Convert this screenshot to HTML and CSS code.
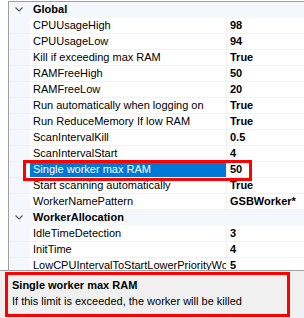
FILE: index.html
```html
<!DOCTYPE html>
<html lang="en">
<head>
    <meta charset="UTF-8">
    <title>Settings</title>
    <link rel="stylesheet" href="styles.css">
</head>
<body>
    <div id="wrap">
        <div class="grid">
            <div class="row cat">
                <div class="margin"><svg width="8" height="5" viewBox="0 0 8 5"><polyline points="0.5,0.5 4,4 7.5,0.5" fill="none" stroke="#555" stroke-width="1.1"/></svg></div>
                <div class="name">Global</div>
            </div>
            <div class="row"><div class="margin"></div><div class="name">CPUUsageHigh</div><div class="val">98</div></div>
            <div class="row"><div class="margin"></div><div class="name">CPUUsageLow</div><div class="val">94</div></div>
            <div class="row"><div class="margin"></div><div class="name">Kill if exceeding max RAM</div><div class="val">True</div></div>
            <div class="row"><div class="margin"></div><div class="name">RAMFreeHigh</div><div class="val">50</div></div>
            <div class="row"><div class="margin"></div><div class="name">RAMFreeLow</div><div class="val">20</div></div>
            <div class="row"><div class="margin"></div><div class="name">Run automatically when logging on</div><div class="val">True</div></div>
            <div class="row"><div class="margin"></div><div class="name">Run ReduceMemory If low RAM</div><div class="val">True</div></div>
            <div class="row"><div class="margin"></div><div class="name">ScanIntervalKill</div><div class="val">0.5</div></div>
            <div class="row"><div class="margin"></div><div class="name">ScanIntervalStart</div><div class="val">4</div></div>
            <div class="row sel"><div class="margin"></div><div class="name">Single worker max RAM</div><div class="val">50</div></div>
            <div class="row"><div class="margin"></div><div class="name">Start scanning automatically</div><div class="val">True</div></div>
            <div class="row"><div class="margin"></div><div class="name">WorkerNamePattern</div><div class="val">GSBWorker*</div></div>
            <div class="row cat">
                <div class="margin"><svg width="8" height="5" viewBox="0 0 8 5"><polyline points="0.5,0.5 4,4 7.5,0.5" fill="none" stroke="#555" stroke-width="1.1"/></svg></div>
                <div class="name">WorkerAllocation</div>
            </div>
            <div class="row"><div class="margin"></div><div class="name">IdleTimeDetection</div><div class="val">3</div></div>
            <div class="row"><div class="margin"></div><div class="name">InitTime</div><div class="val">4</div></div>
            <div class="row"><div class="margin"></div><div class="name">LowCPUIntervalToStartLowerPriorityWor</div><div class="val">5</div></div>
        </div>
        <div class="help">
            <p class="help_title">Single worker max RAM</p>
            <p>If this limit is exceeded, the worker will be killed</p>
        </div>

        <!-- red marks drawn over the screenshot -->
        <div class="mark mark_row"></div>
        <div class="mark mark_help"></div>
    </div>
</body>
</html>
```

FILE: styles.css
```css
* {
    margin: 0;
    padding: 0;
    box-sizing: border-box;
}

body {
    background: #fff;
    font-family: "Liberation Sans", Arial, sans-serif;
    font-size: 11px;
    color: #000;
}

#wrap {
    position: relative;
    width: 304px;
    height: 318px;
    overflow: hidden;
}

.grid {
    margin: 1px 0 0 8px;
    height: 269px;
    border-top: 1px solid #a0a0a0;
    border-left: 1px solid #a0a0a0;
    overflow: hidden;
}

.row {
    display: grid;
    grid-template-columns: 21px 196px 1fr;
    height: 16px;
    border-bottom: 1px solid #f0f2f7;
    line-height: 15px;
}

.margin {
    background: #f4f7fc;
    display: flex;
    align-items: center;
    padding-left: 6px;
}

.name {
    padding-left: 3px;
    white-space: nowrap;
    overflow: hidden;
}

.val {
    border-left: 1px solid #f0f2f7;
    padding-left: 3px;
    font-weight: bold;
    white-space: nowrap;
    overflow: hidden;
}

.cat {
    background: #f4f7fc;
    border-bottom-color: #f4f7fc;
}

.cat .name {
    font-weight: bold;
}

.sel .name {
    background: #0078d7;
    color: #fff;
}

.help {
    height: 48px;
    border-top: 1px solid #a0a0a0;
    background: #f0f0f0;
    padding: 6px 0 0 12px;
    line-height: 16px;
}

.help_title {
    font-weight: bold;
}

.mark {
    position: absolute;
    border: 3px solid #f00;
}

.mark_row {
    left: 23px;
    top: 160px;
    width: 229px;
    height: 21px;
}

.mark_help {
    left: 5px;
    top: 272px;
    width: 285px;
    height: 45px;
}
```
